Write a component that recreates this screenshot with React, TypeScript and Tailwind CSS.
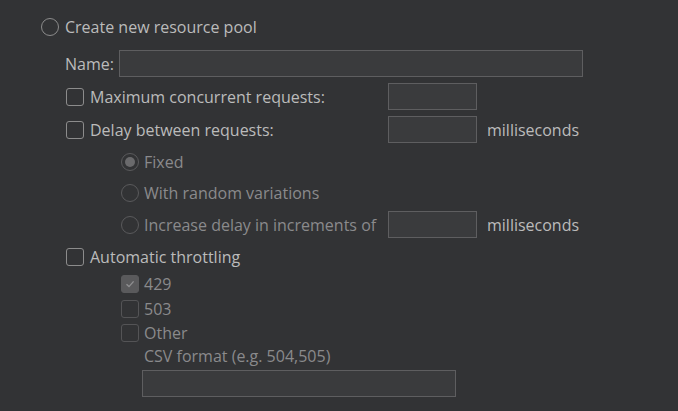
import React from "react";

const font = { fontFamily: '"Open Sans", "Noto Sans", sans-serif' };

function Radio({ checked = false, disabled = false }: { checked?: boolean; disabled?: boolean }) {
  return (
    <span
      className={`flex h-[18px] w-[18px] shrink-0 items-center justify-center rounded-full border ${
        disabled ? "border-[#5a5a5c]" : "border-[#8c8c8c]"
      }`}
    >
      {checked && <span className="h-[10px] w-[10px] rounded-full bg-[#6a6a6c]" />}
    </span>
  );
}

function Check({ checked = false, disabled = false }: { checked?: boolean; disabled?: boolean }) {
  return (
    <span
      className={`flex h-[18px] w-[18px] shrink-0 items-center justify-center rounded-[3px] border ${
        checked ? "border-[#5a5a5c] bg-[#5a5a5c]" : disabled ? "border-[#545456]" : "border-[#8c8c8c]"
      }`}
    >
      {checked && (
        <svg width="12" height="12" viewBox="0 0 12 12">
          <path d="M2.5 6.2 L5 8.6 L9.6 3.4" fill="none" stroke="#8e8e90" strokeWidth="1.4" />
        </svg>
      )}
    </span>
  );
}

function Input({ className = "" }: { className?: string }) {
  return <div className={`h-[27px] border border-[#5e5e60] bg-[#3a3b3d] ${className}`} />;
}

export default function App() {
  return (
    <div className="h-[411px] w-[678px] bg-[#323335] text-[16px] leading-none text-[#bbbbbb]" style={font}>
      <div className="pl-[41px] pt-[18px]">
        <div className="flex h-[18px] items-center gap-[6px]">
          <Radio />
          <span>Create new resource pool</span>
        </div>

        <div className="mt-[14px] flex h-[27px] items-center pl-[24px]">
          <span className="w-[54px]">Name:</span>
          <Input className="w-[464px]" />
        </div>

        <div className="mt-[6px] flex h-[27px] items-center pl-[25px]">
          <div className="flex w-[322px] items-center gap-[6px]">
            <Check />
            <span>Maximum concurrent requests:</span>
          </div>
          <Input className="w-[89px]" />
        </div>

        <div className="mt-[6px] flex h-[27px] items-center pl-[25px]">
          <div className="flex w-[322px] items-center gap-[6px]">
            <Check />
            <span>Delay between requests:</span>
          </div>
          <Input className="w-[89px]" />
          <span className="ml-[10px]">milliseconds</span>
        </div>

        <div className="mt-[9px] flex h-[20px] items-center gap-[5px] pl-[80px] text-[#8a8a8c]">
          <Radio checked disabled />
          <span>Fixed</span>
        </div>

        <div className="mt-[11px] flex h-[20px] items-center gap-[5px] pl-[80px] text-[#8a8a8c]">
          <Radio disabled />
          <span>With random variations</span>
        </div>

        <div className="mt-[8px] flex h-[27px] items-center pl-[80px]">
          <div className="flex w-[267px] items-center gap-[5px] text-[#8a8a8c]">
            <Radio disabled />
            <span>Increase delay in increments of</span>
          </div>
          <Input className="w-[89px]" />
          <span className="ml-[10px]">milliseconds</span>
        </div>

        <div className="mt-[9px] flex h-[20px] items-center gap-[6px] pl-[25px]">
          <Check />
          <span>Automatic throttling</span>
        </div>

        <div className="mt-[7px] flex h-[20px] items-center gap-[5px] pl-[80px] text-[#8a8a8c]">
          <Check checked disabled />
          <span>429</span>
        </div>
        <div className="mt-[5px] flex h-[20px] items-center gap-[5px] pl-[80px] text-[#8a8a8c]">
          <Check disabled />
          <span>503</span>
        </div>
        <div className="mt-[4px] flex h-[20px] items-center gap-[5px] pl-[80px] text-[#8a8a8c]">
          <Check disabled />
          <span>Other</span>
        </div>
        <div className="mt-[3px] flex h-[20px] items-center pl-[103px] text-[#8a8a8c]">
          <span>CSV format (e.g. 504,505)</span>
        </div>
        <div className="mt-[4px] pl-[101px]">
          <Input className="w-[314px]" />
        </div>
      </div>
    </div>
  );
}
